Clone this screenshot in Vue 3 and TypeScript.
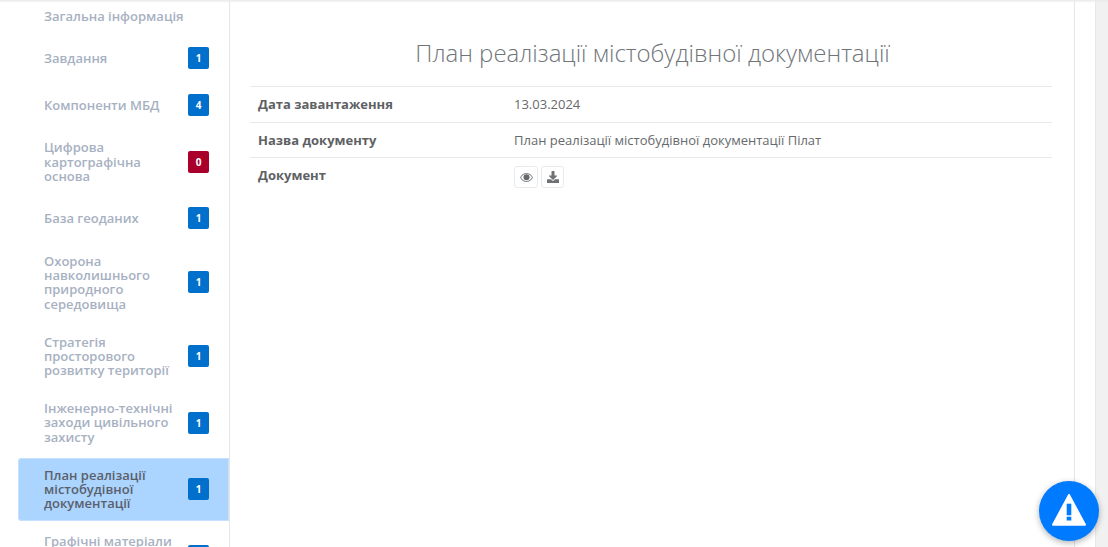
<script setup lang="ts">
interface Item { label: string; count?: number; danger?: boolean; active?: boolean; tail?: boolean }
const items: Item[] = [
  { label: 'Загальна інформація' },
  { label: 'Завдання', count: 1 },
  { label: 'Компоненти МБД', count: 4 },
  { label: 'Цифрова картографічна основа', count: 0, danger: true },
  { label: 'База геоданих', count: 1 },
  { label: 'Охорона навколишнього природного середовища', count: 1 },
  { label: 'Стратегія просторового розвитку території', count: 1 },
  { label: 'Інженерно-технічні заходи цивільного захисту', count: 1 },
  { label: 'План реалізації містобудівної документації', count: 1, active: true },
  { label: 'Графічні матеріали', count: 1, tail: true },
]
const title = 'План реалізації містобудівної документації'
</script>

<template>
  <div class="page">
    <aside class="sidebar">
      <ul class="menu">
        <li v-for="item in items" :key="item.label" class="item" :class="{ active: item.active, plain: item.count === undefined, tail: item.tail }">
          <span class="label">{{ item.label }}</span>
          <span v-if="item.count !== undefined" class="badge" :class="{ danger: item.danger }">{{ item.count }}</span>
        </li>
      </ul>
    </aside>
    <main class="content">
      <h1 class="title">{{ title }}</h1>
      <div class="row first">
        <div class="key">Дата завантаження</div>
        <div class="val">13.03.2024</div>
      </div>
      <div class="row">
        <div class="key">Назва документу</div>
        <div class="val">План реалізації містобудівної документації Пілат</div>
      </div>
      <div class="row doc">
        <div class="key">Документ</div>
        <div class="val actions">
          <button class="btn" aria-label="Переглянути">
            <svg width="13" height="9" viewBox="0 0 26 18">
              <path fill="#8b8f93" fill-rule="evenodd" d="M13 0C7 0 2.500 4 0 9c2.500 5 7 9 13 9s10.500-4 13-9c-2.500-5-7-9-13-9zm0 2c-4.500 0-8.500 3-10.800 7 2.300 4 6.300 7 10.800 7s8.500-3 10.800-7C21.500 5 17.500 2 13 2z"/>
              <circle cx="13" cy="8.500" r="6" fill="#66696c"/>
            </svg>
          </button>
          <button class="btn" aria-label="Завантажити">
            <svg width="12" height="12" viewBox="0 0 512 512"><path fill="#6f7275" d="M216 0h80c13.300 0 24 10.700 24 24v168h87.700c17.800 0 26.700 21.500 14.100 34.100L269.700 378.300c-7.500 7.500-19.800 7.500-27.300 0L90.100 226.100c-12.600-12.600-3.700-34.100 14.100-34.100H192V24c0-13.300 10.700-24 24-24zm296 376v112c0 13.300-10.700 24-24 24H24c-13.300 0-24-10.700-24-24V376c0-13.300 10.700-24 24-24h146.700l49 49c20.100 20.100 52.500 20.100 72.600 0l49-49H488c13.300 0 24 10.700 24 24z"/></svg>
          </button>
        </div>
      </div>
    </main>
    <div class="gutter"></div>
    <div class="scrollbar"></div>
    <button class="fab" aria-label="Повідомити">
      <svg width="36" height="33" viewBox="0 0 36 33">
        <path fill="#fff" stroke="#fff" stroke-width="2" stroke-linejoin="round" d="M18 2 L34 31.700 L2 31.700 Z"/>
        <rect x="15.700" y="10.700" width="4.600" height="11.600" fill="#007bff"/>
        <rect x="15.700" y="23.700" width="4.600" height="3.800" fill="#007bff"/>
      </svg>
    </button>
  </div>
</template>

<style>
html, body { margin: 0; overflow: hidden; background: #fff; }
</style>

<style scoped>
.page {
  position: relative;
  display: flex;
  width: 1108px;
  height: 547px;
  overflow: hidden;
  background: #fff;
  font-family: "Open Sans", "Liberation Sans", sans-serif;
  box-sizing: border-box;
}
.page::before {
  content: "";
  position: absolute;
  inset: 0 0 auto 0;
  height: 3px;
  background: linear-gradient(#e9e9e9, rgba(255, 255, 255, 0));
  z-index: 2;
}
.sidebar {
  flex: 0 0 230px;
  box-sizing: border-box;
  border-right: 1px solid #e6e6e6;
  overflow: hidden;
}
.menu {
  list-style: none;
  margin: -1px 0 0;
  padding: 0 0 0 18px;
  display: flex;
  flex-direction: column;
  gap: 3.7px;
}
.item {
  display: flex;
  align-items: center;
  justify-content: space-between;
  box-sizing: border-box;
  min-height: 43px;
  padding: 10px 20px 10px 26px;
  border-radius: 4px 0 0 4px;
  color: #a7b1c2;
  font-size: 13px;
  font-weight: 600;
  line-height: 14.3px;
}
.item.plain { min-height: 0; }
.item.plain .label { max-width: none; }
.item.tail { min-height: 63px; flex-shrink: 0; }
.item.tail .label { align-self: flex-start; }
.item.active {
  background: #abd4fe;
  color: #5a606b;
  box-shadow: inset 0 0 0 1px #c6e1fe;
}
.label { max-width: 136px; }
.item.tail .label { max-width: 136px; white-space: nowrap; }
.badge {
  flex: 0 0 21px;
  width: 21px;
  height: 22px;
  border-radius: 2px;
  background: #0070cc;
  color: #fff;
  font-size: 10px;
  font-weight: 700;
  line-height: 22px;
  text-align: center;
}
.badge.danger { background: #a8002b; }
.content {
  flex: 0 0 845px;
  box-sizing: border-box;
  padding: 0 22px 0 20px;
  border-right: 1px solid #e6e6e6;
}
.title {
  margin: 36px 0 17px;
  padding-left: 3px;
  height: 33px;
  color: #70757a;
  font-size: 24px;
  font-weight: 300;
  line-height: 33px;
  text-align: center;
}
.row {
  display: flex;
  border-top: 1px solid #e7eaec;
  box-sizing: border-box;
  height: 35px;
  align-items: center;
  color: #676a6c;
  font-size: 13px;
}
.row.first { height: 36px; padding-bottom: 2px; }
.row.doc { align-items: flex-start; padding-top: 8px; }
.key {
  flex: 0 0 264px;
  box-sizing: border-box;
  padding-left: 8px;
  font-weight: 700;
  color: #5e6163;
  line-height: 18px;
}
.val { flex: 1; line-height: 18px; }
.actions { display: flex; gap: 3px; }
.btn {
  display: flex;
  align-items: center;
  justify-content: center;
  width: 24px;
  height: 22px;
  padding: 0;
  background: #fff;
  border: 1px solid #e7eaec;
  border-radius: 3px;
}
.btn + .btn { width: 23px; }
.gutter { flex: 0 0 20px; }
.scrollbar {
  flex: 0 0 13px;
  background: #f1f1f1;
  border-left: 1px solid #e8e8e8;
  box-sizing: border-box;
}
.fab {
  position: absolute;
  left: 1039px;
  top: 481px;
  width: 60px;
  height: 60px;
  padding: 0 0 4px;
  border: 0;
  border-radius: 50%;
  background: #007bff;
  box-shadow: 0 2px 6px rgba(0, 0, 0, 0.3);
  display: flex;
  align-items: center;
  justify-content: center;
}
</style>
